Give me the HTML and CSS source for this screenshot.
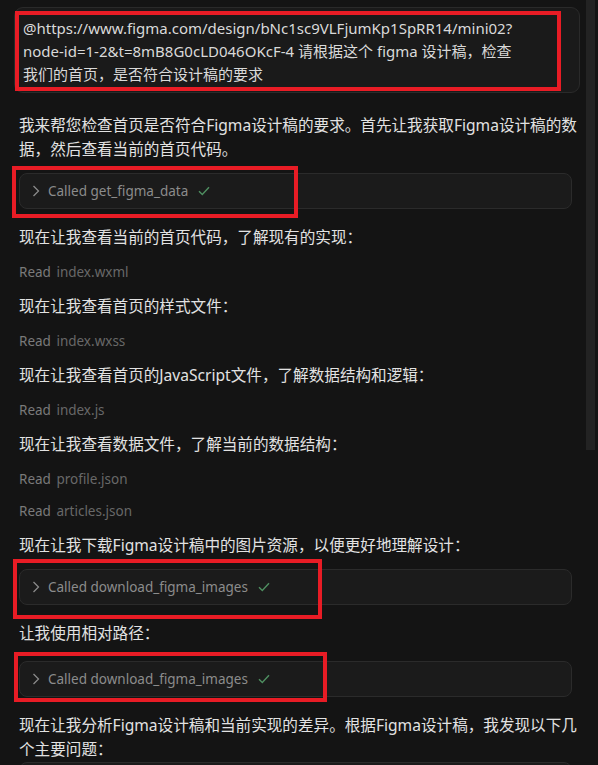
FILE: index.html
```html
<!DOCTYPE html>
<html lang="zh-CN">
<head>
<meta charset="utf-8">
<title>Chat</title>
<link rel="stylesheet" href="styles.css">
</head>
<body>
<div class="chat">
  <div class="user-msg">@https://www.figma.com/design/bNc1sc9VLFjumKp1SpRR14/mini02?<br>node-id=1-2&amp;t=8mB8G0cLD046OKcF-4 请根据这个 figma 设计稿，检查<br>我们的首页，是否符合设计稿的要求</div>

  <div class="reply">
    <p class="para">我来帮您检查首页是否符合Figma设计稿的要求。首先让我获取Figma设计稿的数<br>据，然后查看当前的首页代码。</p>

    <div class="tool">
      <svg class="chev" width="8" height="12" viewBox="0 0 8 12"><polyline points="1.5,1 6.5,6 1.5,11" fill="none" stroke="#8a8a8a" stroke-width="1.3"/></svg>
      <span class="tool-name">Called get_figma_data</span>
      <svg class="check" width="12" height="10" viewBox="0 0 12 10"><polyline points="1,5.2 4.3,8.5 11,1.3" fill="none" stroke="#4f8f61" stroke-width="1.4"/></svg>
    </div>

    <p class="para">现在让我查看当前的首页代码，了解现有的实现：</p>
    <div class="read"><span class="read-label">Read</span> index.wxml</div>

    <p class="para">现在让我查看首页的样式文件：</p>
    <div class="read"><span class="read-label">Read</span> index.wxss</div>

    <p class="para">现在让我查看首页的JavaScript文件，了解数据结构和逻辑：</p>
    <div class="read"><span class="read-label">Read</span> index.js</div>

    <p class="para">现在让我查看数据文件，了解当前的数据结构：</p>
    <div class="read"><span class="read-label">Read</span> profile.json</div>
    <div class="read"><span class="read-label">Read</span> articles.json</div>

    <p class="para">现在让我下载Figma设计稿中的图片资源，以便更好地理解设计：</p>

    <div class="tool">
      <svg class="chev" width="8" height="12" viewBox="0 0 8 12"><polyline points="1.5,1 6.5,6 1.5,11" fill="none" stroke="#8a8a8a" stroke-width="1.3"/></svg>
      <span class="tool-name">Called download_figma_images</span>
      <svg class="check" width="12" height="10" viewBox="0 0 12 10"><polyline points="1,5.2 4.3,8.5 11,1.3" fill="none" stroke="#4f8f61" stroke-width="1.4"/></svg>
    </div>

    <p class="para">让我使用相对路径：</p>

    <div class="tool tool-spaced">
      <svg class="chev" width="8" height="12" viewBox="0 0 8 12"><polyline points="1.5,1 6.5,6 1.5,11" fill="none" stroke="#8a8a8a" stroke-width="1.3"/></svg>
      <span class="tool-name">Called download_figma_images</span>
      <svg class="check" width="12" height="10" viewBox="0 0 12 10"><polyline points="1,5.2 4.3,8.5 11,1.3" fill="none" stroke="#4f8f61" stroke-width="1.4"/></svg>
    </div>

    <p class="para">现在让我分析Figma设计稿和当前实现的差异。根据Figma设计稿，我发现以下几<br>个主要问题：</p>

    <div class="tool tool-partial"></div>
  </div>
</div>

<div class="scrollbar"></div>

<div class="mark mark-1"></div>
<div class="mark mark-2"></div>
<div class="mark mark-3"></div>
<div class="mark mark-4"></div>
</body>
</html>
```

FILE: styles.css
```css
html, body {
  margin: 0;
  padding: 0;
  background: #141414;
  height: 100%;
  overflow: hidden;
}

body {
  position: relative;
  font-family: "Noto Sans", "Noto Sans CJK SC", sans-serif;
  color: #dedede;
}

.chat {
  width: 566px;
  padding: 7px 0 0 14px;
  display: flex;
  flex-direction: column;
  gap: 20px;
}

.user-msg {
  background: #1a1a1a;
  border: 1px solid #2a2a2a;
  border-radius: 9px;
  padding: 9px 8px 6px 8px;
  font-size: 15px;
  line-height: 23px;
  color: #d9d9d9;
  white-space: nowrap;
}

.reply {
  padding: 0 8px 0 5px;
  display: flex;
  flex-direction: column;
  gap: 12px;
}

.para {
  margin: 0;
  font-size: 15.6px;
  line-height: 24px;
  color: #e2e2e2;
  white-space: nowrap;
}

.tool {
  box-sizing: border-box;
  height: 36px;
  margin: 0 0 4px 0;
  background: #1b1b1b;
  border: 1px solid #2b2b2b;
  border-radius: 8px;
  display: flex;
  align-items: center;
  padding-left: 12px;
  gap: 8px;
  font-size: 13.5px;
  color: #8c8c8c;
}

.tool-spaced {
  margin-top: 4px;
}

.tool-partial {
  margin-top: -11px;
}

.tool-name {
  line-height: 20px;
}

.check {
  margin-left: 2px;
}

.read {
  height: 20px;
  line-height: 20px;
  font-size: 13.5px;
  color: #686868;
}

.para + .read {
  margin-top: 1px;
}

.read-label {
  color: #7a7a7a;
  margin-right: 2px;
}

.scrollbar {
  position: absolute;
  left: 586px;
  top: 0;
  width: 9px;
  height: 450px;
  background: #232323;
}

.mark {
  position: absolute;
  border: 4px solid #e81c25;
  box-sizing: border-box;
}

.mark-1 { left: 15px; top: 11px; width: 546px; height: 80px; }
.mark-2 { left: 12px; top: 166px; width: 286px; height: 52px; }
.mark-3 { left: 13px; top: 559px; width: 309px; height: 60px; }
.mark-4 { left: 14px; top: 652px; width: 313px; height: 50px; }
```
